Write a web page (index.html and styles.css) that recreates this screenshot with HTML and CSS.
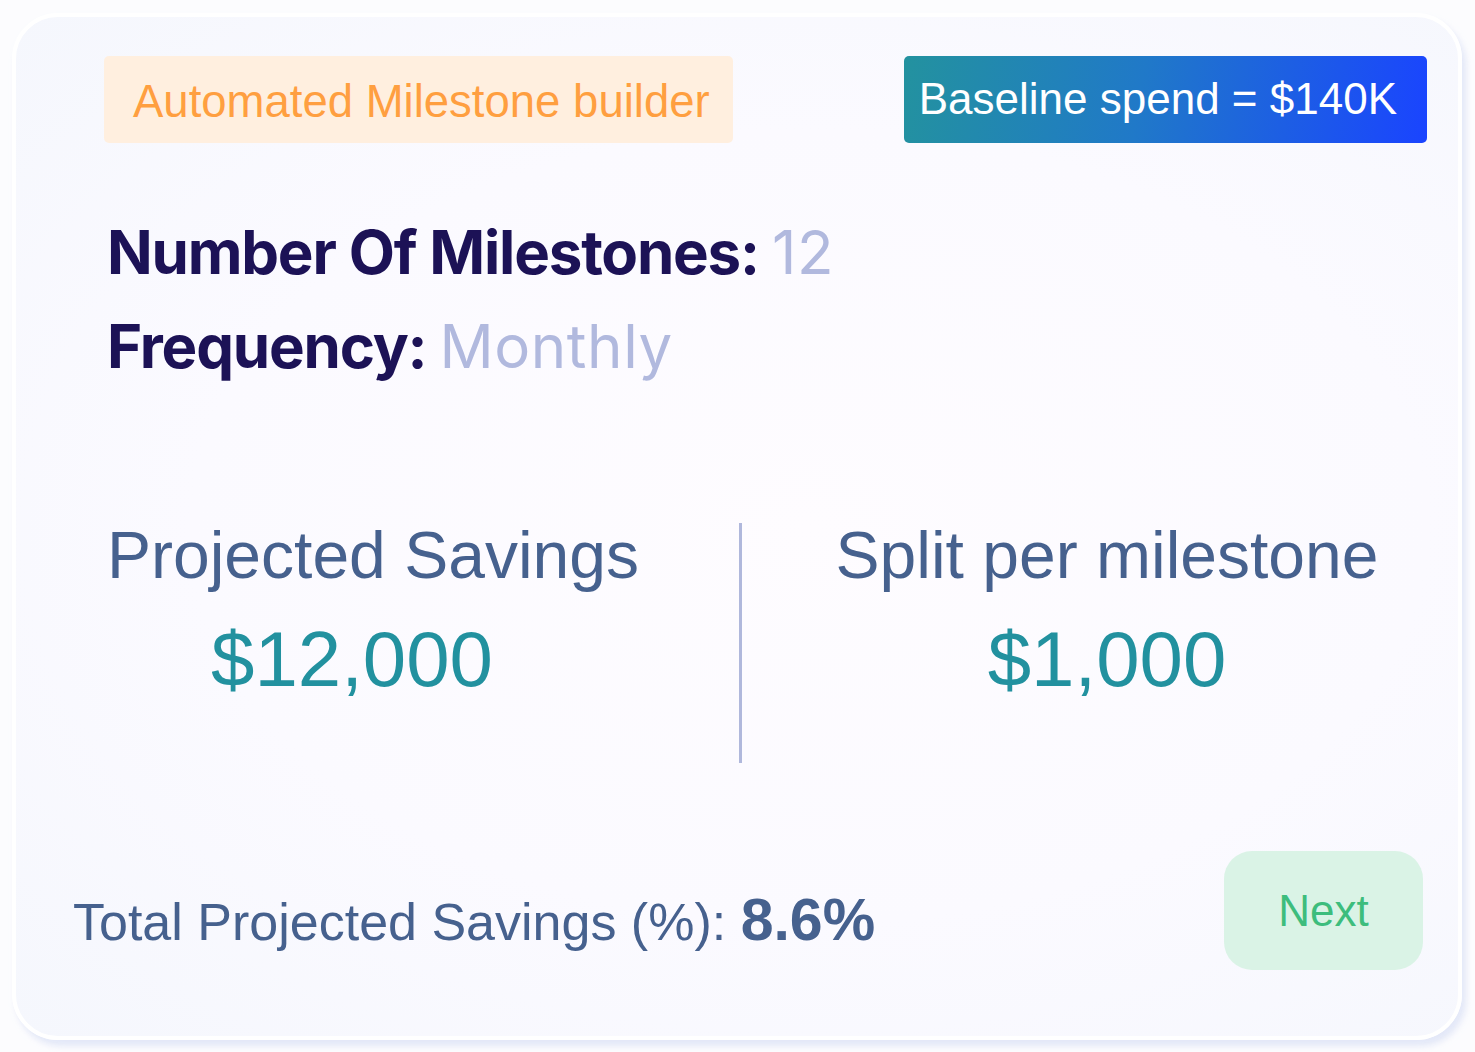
FILE: index.html
```html
<!DOCTYPE html>
<html>
<head>
    <meta charset="utf-8" />
    <title>Milestone Builder</title>
    <link rel="stylesheet" href="styles.css">
</head>
<body>
    <div class="card">
        <div class="topRow">
            <div class="tagOrange">Automated Milestone builder</div>
            <div class="tagBaseline">Baseline spend = $140K</div>
        </div>

        <div class="info">
            <div class="infoLine">Number Of Milestones: <span class="infoValue">12</span></div>
            <div class="infoLine">Frequency: <span class="infoValue">Monthly</span></div>
        </div>

        <div class="stats">
            <div class="statCol statLeft">
                <div class="statTitle">Projected Savings</div>
                <div class="statNumber">$12,000</div>
            </div>
            <div class="divider"></div>
            <div class="statCol statRight">
                <div class="statTitle">Split per milestone</div>
                <div class="statNumber">$1,000</div>
            </div>
        </div>

        <div class="bottomRow">
            <div class="total">Total Projected Savings (%): <b>8.6%</b></div>
            <button class="nextButton">Next</button>
        </div>
    </div>
</body>
</html>
```

FILE: styles.css
```css
body {
    margin: 0;
    padding: 13px 13px 12px 12px;
    background: #fcfcfe;
    font-family: "Liberation Sans", Arial, sans-serif;
    overflow: hidden;
}

.card {
    box-sizing: border-box;
    height: 1027px;
    border: 4px solid #ffffff;
    border-radius: 46px;
    background: radial-gradient(ellipse at 55% 50%, #fefcff 0%, #fbfaff 55%, #f5f7fd 100%);
    box-shadow: 4px 6px 6px rgba(210, 218, 244, 0.6);
    padding: 39px 31px 0 57px;
    display: flex;
    flex-direction: column;
}

.topRow {
    display: flex;
    justify-content: space-between;
    padding-left: 31px;
}

.tagOrange {
    background: #ffefdf;
    color: #ff9f40;
    font-size: 45.5px;
    height: 87px;
    line-height: 92px;
    padding: 0 23px 0 29px;
    border-radius: 5px;
}

.tagBaseline {
    background: linear-gradient(100deg, #23929f 0%, #2079c8 45%, #1a44ff 100%);
    color: #ffffff;
    font-size: 44px;
    height: 87px;
    line-height: 86px;
    padding: 0 30px 0 15px;
    border-radius: 5px;
}

.info {
    padding-left: 34px;
    margin-top: 62px;
}

.infoLine {
    font-family: Inter, "Open Sans", sans-serif;
    font-weight: 700;
    font-size: 60px;
    line-height: 94px;
    color: #1c1256;
    letter-spacing: -1.2px;
}

.infoValue {
    font-weight: 400;
    color: #b1b9de;
    letter-spacing: 0.6px;
}

.stats {
    display: flex;
    margin-top: 136px;
    padding-left: 34px;
}

.statCol {
    flex: 1;
}

.statLeft {
    flex: 0 0 632px;
}

.statRight {
    text-align: center;
    padding-left: 45px;
}

.statTitle {
    color: #46618e;
    font-size: 66px;
    line-height: 72px;
    margin-top: -10px;
}

.statNumber {
    color: #22919f;
    font-size: 78px;
    line-height: 100px;
    margin-top: 18px;
}

.statLeft .statNumber {
    padding-left: 104px;
}

.divider {
    width: 3px;
    height: 240px;
    background: #b0b8dc;
    margin-top: -6px;
}

.bottomRow {
    display: flex;
    justify-content: space-between;
    align-items: center;
    margin-top: 88px;
    padding-right: 4px;
}

.total {
    color: #46618e;
    font-size: 52px;
    margin-top: 18px;
}

.total b {
    font-size: 59px;
}

.nextButton {
    width: 199px;
    height: 119px;
    border: none;
    border-radius: 28px;
    background: #daf3e6;
    color: #3dbd7d;
    font-family: "Liberation Sans", Arial, sans-serif;
    font-size: 44px;
    cursor: pointer;
}
```
